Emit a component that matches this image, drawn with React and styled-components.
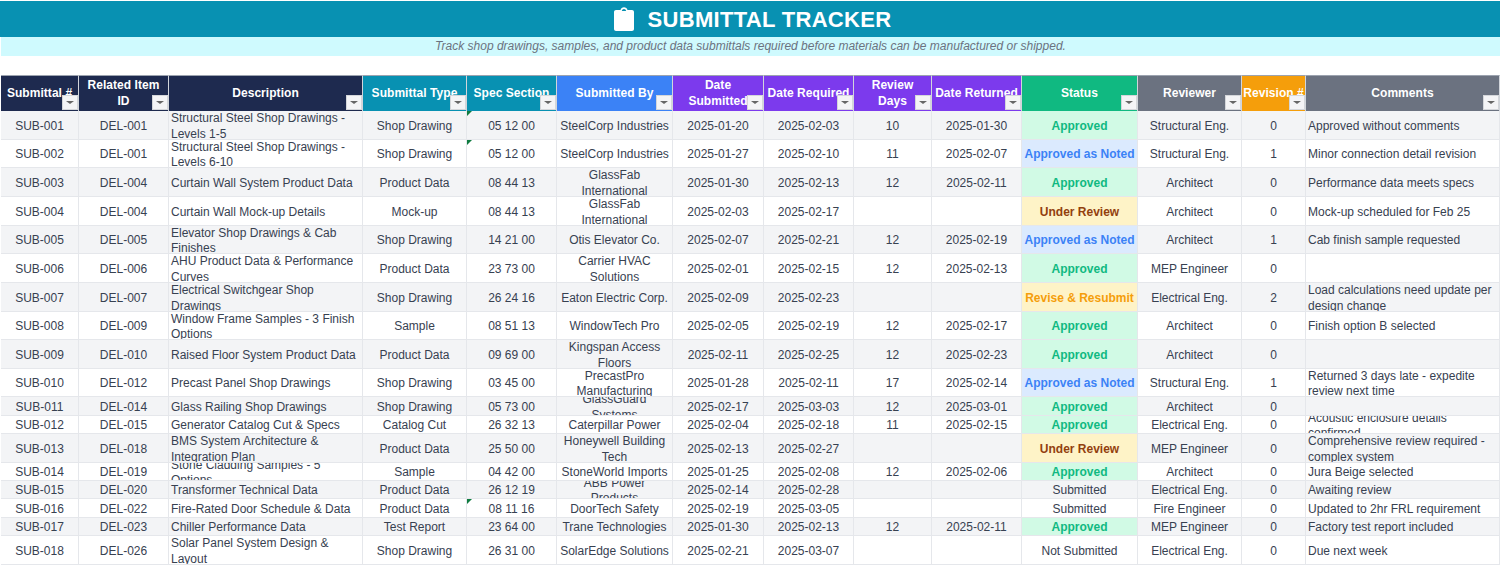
import React from "react";
import styled, { createGlobalStyle } from "styled-components";

const Global = createGlobalStyle`
  html, body { margin: 0; padding: 0; background: #fff; overflow: hidden; }
  body { font-family: "Liberation Sans", Arial, sans-serif; }
`;

const Page = styled.div`
  width: 1500px;
  height: 565px;
  overflow: hidden;
  padding-top: 1px;
  box-sizing: border-box;
`;

const Banner = styled.header`
  height: 36px;
  background: #0891b2;
  display: flex;
  align-items: center;
  justify-content: center;
  gap: 14px;
  color: #fff;
  padding-left: 5px;
  box-sizing: border-box;
`;

const Title = styled.h1`
  margin: 2px 0 0;
  font-size: 22px;
  font-weight: 700;
  letter-spacing: 0.3px;
`;

const Subtitle = styled.div`
  height: 19px;
  margin-left: 1px;
  padding-bottom: 1px;
  box-sizing: border-box;
  background: #cffafe;
  color: #6b7280;
  font-size: 12px;
  font-style: italic;
  display: flex;
  align-items: center;
  justify-content: center;
`;

const Sheet = styled.div`
  margin-top: 19px;
  display: grid;
  grid-template-columns: 78px 90px 194px 104px 90px 116px 91px 90px 78px 90px 116px 104px 64px 194px;
  width: 1499px;
  margin-left: 1px;
`;

const Head = styled.div`
  position: relative;
  height: 36px;
  background: ${(p) => p.$bg};
  color: #fff;
  font-size: 12px;
  line-height: 16px;
  font-weight: 700;
  letter-spacing: 0.05px;
  text-align: center;
  display: flex;
  align-items: center;
  justify-content: center;
  padding: 0 1px 2px;
  box-sizing: border-box;
  overflow: hidden;
  white-space: pre-line;
  border-right: 1px solid #d1d5db;
  border-top: 1px solid #9ca3af;
`;

const Filter = styled.span`
  position: absolute;
  right: 0;
  bottom: 1px;
  width: 16px;
  height: 15px;
  background: #f4f4f6;
  border: 1px solid #d4d6da;
  box-sizing: border-box;
  display: flex;
  align-items: center;
  justify-content: center;
  &::after {
    content: "";
    border-left: 4px solid transparent;
    border-right: 4px solid transparent;
    border-top: 3px solid #666;
  }
`;

const Cell = styled.div`
  position: relative;
  height: ${(p) => p.$h}px;
  background: ${(p) => p.$bg};
  color: ${(p) => p.$fg || "#374151"};
  font-size: 12px;
  line-height: 15.5px;
  font-weight: ${(p) => (p.$bold ? 700 : 400)};
  text-align: ${(p) => p.$align};
  display: flex;
  align-items: center;
  justify-content: ${(p) => (p.$align === "left" ? "flex-start" : "center")};
  padding: 3px 2px 0;
  box-sizing: border-box;
  overflow: hidden;
  border-right: 1px solid #e5e7eb;
  border-bottom: 1px solid #e5e7eb;
`;

const Flag = styled.span`
  position: absolute;
  left: 0;
  top: 0;
  border-right: 5px solid transparent;
  border-top: 5px solid #107c41;
`;

const heads = [
  ["Submittal #", "#1e2a4f"], ["Related Item\nID", "#1e2a4f"], ["Description", "#1e2a4f"],
  ["Submittal Type", "#0891b2"], ["Spec Section", "#0891b2"], ["Submitted By", "#3b82f6"],
  ["Date\nSubmitted", "#7c3aed"], ["Date Required", "#7c3aed"], ["Review\nDays", "#7c3aed"], ["Date Returned", "#7c3aed"],
  ["Status", "#10b981"], ["Reviewer", "#6b7280"], ["Revision #", "#f59e0b"], ["Comments", "#6b7280"],
];

const S = { A: "Approved", N: "Approved as Noted", U: "Under Review", R: "Revise & Resubmit", S: "Submitted", X: "Not Submitted" };
const statusStyle = {
  A: { bg: "#d1fae5", fg: "#10b981", bold: true },
  N: { bg: "#dbeafe", fg: "#3b82f6", bold: true },
  U: { bg: "#fef3c7", fg: "#92400e", bold: true },
  R: { bg: "#fef3c7", fg: "#f59e0b", bold: true },
};

const rows = [
  [29, "SUB-001","DEL-001","Structural Steel Shop Drawings - Levels 1-5","Shop Drawing","05 12 00","SteelCorp Industries","2025-01-20","2025-02-03","10","2025-01-30","A","Structural Eng.","0","Approved without comments",true],
  [28, "SUB-002","DEL-001","Structural Steel Shop Drawings - Levels 6-10","Shop Drawing","05 12 00","SteelCorp Industries","2025-01-27","2025-02-10","11","2025-02-07","N","Structural Eng.","1","Minor connection detail revision",true],
  [29, "SUB-003","DEL-004","Curtain Wall System Product Data","Product Data","08 44 13","GlassFab International","2025-01-30","2025-02-13","12","2025-02-11","A","Architect","0","Performance data meets specs"],
  [29, "SUB-004","DEL-004","Curtain Wall Mock-up Details","Mock-up","08 44 13","GlassFab International","2025-02-03","2025-02-17","","","U","Architect","0","Mock-up scheduled for Feb 25"],
  [28, "SUB-005","DEL-005","Elevator Shop Drawings & Cab Finishes","Shop Drawing","14 21 00","Otis Elevator Co.","2025-02-07","2025-02-21","12","2025-02-19","N","Architect","1","Cab finish sample requested"],
  [29, "SUB-006","DEL-006","AHU Product Data & Performance Curves","Product Data","23 73 00","Carrier HVAC Solutions","2025-02-01","2025-02-15","12","2025-02-13","A","MEP Engineer","0",""],
  [29, "SUB-007","DEL-007","Electrical Switchgear Shop Drawings","Shop Drawing","26 24 16","Eaton Electric Corp.","2025-02-09","2025-02-23","","","R","Electrical Eng.","2","Load calculations need update per design change"],
  [28, "SUB-008","DEL-009","Window Frame Samples - 3 Finish Options","Sample","08 51 13","WindowTech Pro","2025-02-05","2025-02-19","12","2025-02-17","A","Architect","0","Finish option B selected"],
  [29, "SUB-009","DEL-010","Raised Floor System Product Data","Product Data","09 69 00","Kingspan Access Floors","2025-02-11","2025-02-25","12","2025-02-23","A","Architect","0",""],
  [28, "SUB-010","DEL-012","Precast Panel Shop Drawings","Shop Drawing","03 45 00","PrecastPro Manufacturing","2025-01-28","2025-02-11","17","2025-02-14","N","Structural Eng.","1","Returned 3 days late - expedite review next time"],
  [19, "SUB-011","DEL-014","Glass Railing Shop Drawings","Shop Drawing","05 73 00","GlassGuard Systems","2025-02-17","2025-03-03","12","2025-03-01","A","Architect","0",""],
  [18, "SUB-012","DEL-015","Generator Catalog Cut & Specs","Catalog Cut","26 32 13","Caterpillar Power","2025-02-04","2025-02-18","11","2025-02-15","A","Electrical Eng.","0","Acoustic enclosure details confirmed"],
  [29, "SUB-013","DEL-018","BMS System Architecture & Integration Plan","Product Data","25 50 00","Honeywell Building Tech","2025-02-13","2025-02-27","","","U","MEP Engineer","0","Comprehensive review required - complex system"],
  [18, "SUB-014","DEL-019","Stone Cladding Samples - 5 Options","Sample","04 42 00","StoneWorld Imports","2025-01-25","2025-02-08","12","2025-02-06","A","Architect","0","Jura Beige selected"],
  [18, "SUB-015","DEL-020","Transformer Technical Data","Product Data","26 12 19","ABB Power Products","2025-02-14","2025-02-28","","","S","Electrical Eng.","0","Awaiting review"],
  [19, "SUB-016","DEL-022","Fire-Rated Door Schedule & Data","Product Data","08 11 16","DoorTech Safety","2025-02-19","2025-03-05","","","S","Fire Engineer","0","Updated to 2hr FRL requirement",true],
  [18, "SUB-017","DEL-023","Chiller Performance Data","Test Report","23 64 00","Trane Technologies","2025-01-30","2025-02-13","12","2025-02-11","A","MEP Engineer","0","Factory test report included"],
  [29, "SUB-018","DEL-026","Solar Panel System Design & Layout","Shop Drawing","26 31 00","SolarEdge Solutions","2025-02-21","2025-03-07","","","X","Electrical Eng.","0","Due next week"],
];

const ClipIcon = () => (
  <svg width="20" height="24" viewBox="0 0 20 24" aria-hidden="true">
    <path fill="#fff" fillRule="evenodd" d="M2 3h4.500C7 1.300 8.300.3 10 .3s3 1 3.500 2.700H18c1.100 0 2 .9 2 2v17c0 1.100-.9 2-2 2H2c-1.100 0-2-.9-2-2V5c0-1.100.9-2 2-2zM7.800 4h4.400C11.900 2.700 11.100 2 10 2S8.100 2.700 7.800 4z" />
  </svg>
);

export default function App() {
  return (
    <Page>
      <Global />
      <Banner>
        <ClipIcon />
        <Title>SUBMITTAL TRACKER</Title>
      </Banner>
      <Subtitle>Track shop drawings, samples, and product data submittals required before materials can be manufactured or shipped.</Subtitle>
      <Sheet>
        {heads.map(([label, bg]) => (
          <Head key={label} $bg={bg}>
            {label}
            <Filter />
          </Head>
        ))}
        {rows.map((r) => {
          const [h, ...vals] = r;
          const i = rows.indexOf(r);
          const flag = vals[14];
          const zebra = i % 2 === 0 ? "#f3f4f6" : "#ffffff";
          return vals.slice(0, 14).map((v, c) => {
            const left = c === 2 || c === 13;
            if (c === 10) {
              const st = statusStyle[v];
              return (
                <Cell key={`${i}-${c}`} $h={h} $align="center" $bg={st ? st.bg : zebra} $fg={st?.fg} $bold={st?.bold}>
                  {S[v]}
                </Cell>
              );
            }
            return (
              <Cell key={`${i}-${c}`} $h={h} $align={left ? "left" : "center"} $bg={zebra}>
                {c === 4 && flag && <Flag />}
                {v}
              </Cell>
            );
          });
        })}
      </Sheet>
    </Page>
  );
}
